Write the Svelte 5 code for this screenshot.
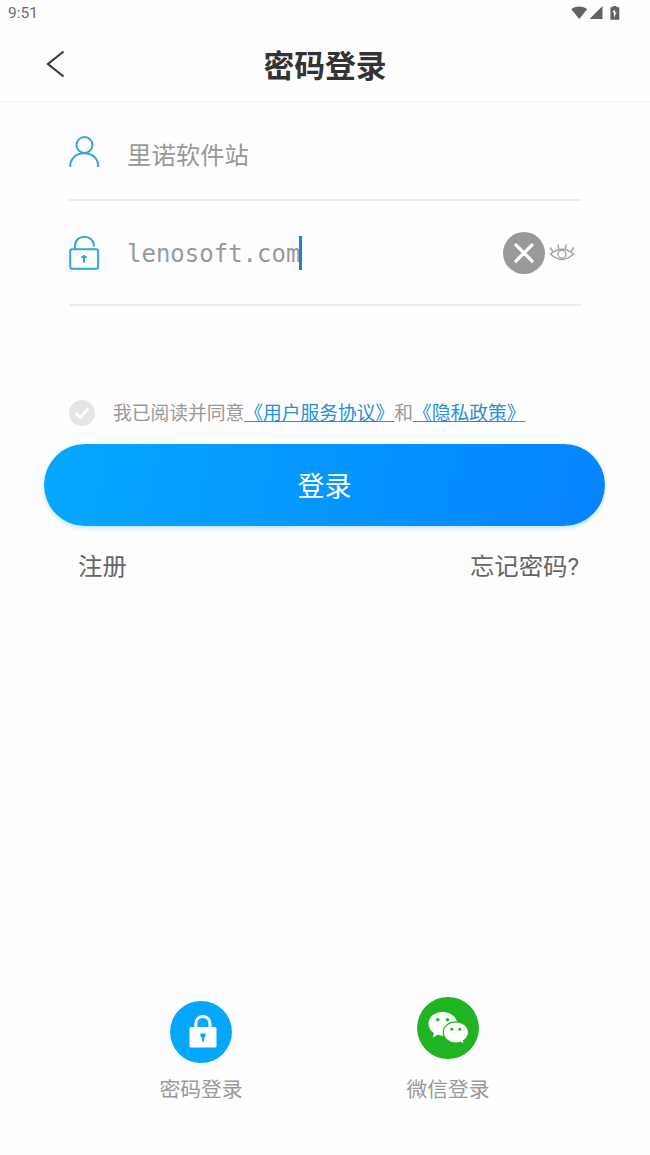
<svelte:options runes={true} />

<script lang="ts">
	let account = $state('里诺软件站');
	let password = $state('lenosoft.com');
	let agreed = $state(false);
</script>

<main class="screen">
	<div class="status-bar">
		<span>9:51</span>
		<svg width="50" height="16" viewBox="0 0 50 16" aria-hidden="true">
			<path d="M0.3 4.2 C4.500 .7 12 .7 16.100 4.200 L8.200 14 Z" />
			<path d="M18.500 14 L31.500 1 V14 Z" />
			<path fill-rule="evenodd" d="M41.500 1 H45.500 V2.300 H48.300 V14.700 H39.400 V2.300 H41.500 Z M43.400 4.500 L41.300 7.200 H42.700 V9.500 L43.500 12.500 L44.300 9.500 L45.800 7.500 H44.500 Z" />
		</svg>
	</div>

	<header class="nav">
		<button class="back" aria-label="返回">
			<svg width="20" height="30" viewBox="0 0 20 30">
				<path d="M18.500 2.500 L3 15 L18.500 27.500" />
			</svg>
		</button>
		<h1>密码登录</h1>
	</header>

	<div class="form">
		<div class="field account">
			<svg class="icon user" width="32" height="34" viewBox="0 0 32 34" aria-hidden="true">
				<circle cx="15.500" cy="10" r="8" />
				<path d="M1.200 32 C1.200 23 7.500 18.300 15.300 18.300 S29.300 23 29.300 32" />
			</svg>
			<span class="value">{account}</span>
		</div>
		<div class="field secret">
			<svg class="icon lock" width="32" height="36" viewBox="0 0 32 36" aria-hidden="true">
				<rect x="1.200" y="14.200" width="28" height="19.500" rx="2" />
				<path d="M6 14 V11 C6 -1.500 25 -1.500 25 11.500" />
				<path d="M15 20 V27.500 M12.300 22 H17.700" />
			</svg>
			<span class="value mono">{password}</span>
			<i class="caret"></i>
			<button class="clear" aria-label="清除" onclick={() => (password = '')}>
				<svg width="42" height="42" viewBox="0 0 42 42">
					<circle cx="21" cy="21" r="21" />
					<path d="M13 13 L29 29 M29 13 L13 29" />
				</svg>
			</button>
			<svg class="eye" width="26" height="20" viewBox="0 0 26 20" aria-hidden="true">
				<path d="M1.500 11 Q13 1.500 24.500 11 Q13 22 1.500 11 Z" />
				<circle cx="13" cy="11.300" r="4" />
				<path d="M3.800 8.500 L1 4.500 M9.800 5.800 L9 1.500 M16.200 5.800 L17.300 1.500 M22 8.500 L24.700 4.500" />
			</svg>
		</div>
	</div>

	<div class="terms">
		<button class="check" class:agreed aria-label="同意" onclick={() => (agreed = !agreed)}>
			<svg width="26" height="26" viewBox="0 0 26 26">
				<circle cx="13" cy="13" r="13" />
				<path d="M6.500 13 L11 17.500 L19.500 8.500" />
			</svg>
		</button>
		<p>我已阅读并同意<a href="#terms">《用户服务协议》</a>和<a href="#privacy">《隐私政策》</a></p>
	</div>

	<button class="submit">登录</button>

	<div class="links">
		<span>注册</span>
		<span>忘记密码?</span>
	</div>

	<footer class="methods">
		<div class="method">
			<svg width="62" height="62" viewBox="0 0 62 62" aria-hidden="true">
				<circle cx="31" cy="31" r="31" fill="#05a7fd" />
				<rect x="19.500" y="26" width="27" height="20.500" rx="1.500" fill="#fff" />
				<path d="M25.800 27 V23 C25.800 13 40 13 40 23 V27" fill="none" stroke="#fff" stroke-width="3" />
				<path d="M30.500 32.500 H35.500 V35.500 L34 37 V40.500 H32 V37 L30.500 35.500 Z" fill="#05a7fd" />
			</svg>
			<span>密码登录</span>
		</div>
		<div class="method wechat">
			<svg width="62" height="62" viewBox="0 0 62 62" aria-hidden="true">
				<circle cx="31" cy="31" r="31" fill="#20b422" />
				<path d="M25.500 15 C17.500 15 11.500 20 11.500 26.800 C11.500 30.700 13.500 34 17 36.200 L15.500 40.500 L20.800 37.800 Q25 39.200 29 38.500 L40 24.500 C38.500 18.800 32.500 15 25.500 15 Z" fill="#fff" />
				<path d="M38.800 24.800 C31.800 24.800 26.300 29.500 26.300 35.300 C26.300 41.300 31.800 46 38.800 46 Q41.300 46 43.500 45.200 L47.500 47.500 L46.500 43.700 C49.500 41.700 51.500 38.700 51.500 35.300 C51.500 29.500 46 24.800 38.800 24.800 Z" fill="#fff" stroke="#20b422" stroke-width="1.200" />
				<g fill="#20b422">
					<circle cx="20.800" cy="22.800" r="1.800" />
					<circle cx="30.500" cy="22.800" r="1.800" />
					<circle cx="34.800" cy="32.300" r="1.500" />
					<circle cx="42.800" cy="32.300" r="1.500" />
				</g>
			</svg>
			<span>微信登录</span>
		</div>
	</footer>
</main>

<style>
	:global(body) {
		background: #fefefe;
	}

	.screen {
		display: flex;
		flex-direction: column;
		box-sizing: border-box;
		width: 650px;
		height: 1155px;
		overflow: hidden;
		font-family: Roboto, 'Noto Sans CJK SC', sans-serif;
	}

	button {
		padding: 0;
		border: 0;
		background: none;
		font: inherit;
		cursor: pointer;
	}

	svg {
		display: block;
		flex: none;
	}

	.status-bar {
		display: flex;
		align-items: center;
		justify-content: space-between;
		box-sizing: border-box;
		height: 27px;
		padding: 0 29px 2px 8px;
		color: #6a6a6a;
		font-size: 15.5px;
	}

	.status-bar svg {
		fill: #626262;
	}

	.nav {
		display: grid;
		grid-template-columns: 65px 1fr 65px;
		align-items: center;
		box-sizing: border-box;
		height: 75px;
		border-bottom: 1px solid #f4f4f4;
	}

	.back {
		justify-self: end;
	}

	.back path {
		fill: none;
		stroke: #3c3c3c;
		stroke-width: 2.2;
	}

	h1 {
		margin: 0;
		padding-top: 5px;
		color: #333;
		font-size: 30.8px;
		font-weight: 700;
		line-height: 44px;
		text-align: center;
	}

	.form {
		padding: 0 69px;
	}

	.field {
		display: flex;
		align-items: center;
		box-sizing: border-box;
		border-bottom: 2px solid #ececec;
	}

	.account {
		height: 99px;
		padding-top: 11px;
	}

	.secret {
		height: 105px;
	}

	.icon {
		margin-right: 26px;
		fill: none;
		stroke: #2fa6dc;
		stroke-width: 2;
	}

	.user {
		margin-top: -9px;
	}

	.value {
		color: #999;
		font-size: 24.4px;
		line-height: 36px;
	}

	.mono {
		padding-top: 3px;
		font-family: 'DejaVu Sans Mono', monospace;
		font-size: 24px;
	}

	.caret {
		width: 3px;
		height: 34px;
		margin-left: -1px;
		background: #2080dc;
	}

	.clear {
		margin-left: auto;
	}

	.clear circle {
		fill: #999;
	}

	.clear path {
		fill: none;
		stroke: #fff;
		stroke-width: 3.2;
		stroke-linecap: round;
	}

	.eye {
		margin: 0 6px 0 4px;
		fill: none;
		stroke: #a3a3a3;
		stroke-width: 1.4;
	}

	.terms {
		display: flex;
		align-items: center;
		gap: 18px;
		height: 30px;
		margin-top: 92px;
		padding-left: 69px;
	}

	.check circle {
		fill: #e5e5e5;
	}

	.check.agreed circle {
		fill: #05a7fd;
	}

	.check path {
		fill: none;
		stroke: #fff;
		stroke-width: 2.6;
	}

	.terms p {
		margin: 0;
		padding-bottom: 3px;
		color: #999;
		font-size: 18.75px;
		white-space: nowrap;
	}

	.terms a {
		color: #2590d5;
		text-decoration: underline;
		text-decoration-thickness: 1px;
	}

	.submit {
		height: 82px;
		margin: 16px 45px 0 44px;
		padding-bottom: 2px;
		border-radius: 41px;
		background: linear-gradient(100deg, #04a8ff, #0684ff);
		box-shadow: 0 2px 4px rgba(0, 140, 240, 0.25);
		color: #fff;
		font-size: 27px;
	}

	.links {
		display: flex;
		justify-content: space-between;
		margin-top: 23px;
		padding: 0 71px 0 78px;
		color: #666;
		font-size: 24.4px;
		line-height: 36px;
	}

	.methods {
		display: grid;
		grid-template-columns: 247px 247px;
		justify-content: center;
		margin-top: auto;
		padding: 0 1px 50px 0;
	}

	.method {
		display: flex;
		flex-direction: column;
		align-items: center;
		justify-content: flex-end;
		gap: 12px;
		color: #999;
		font-size: 20.8px;
		line-height: 30px;
	}

	.wechat {
		gap: 16px;
	}
</style>
